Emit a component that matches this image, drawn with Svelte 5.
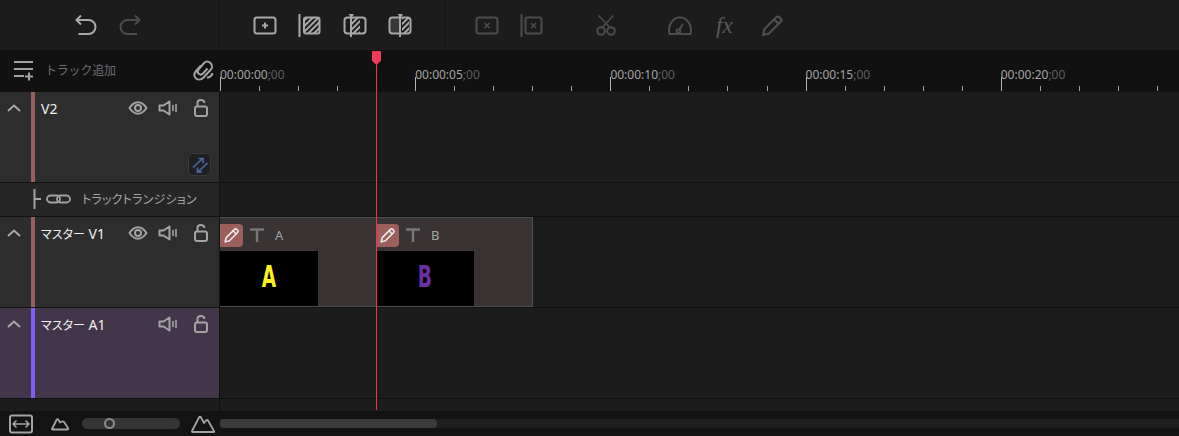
<script>
	const majors = ["00:00:00", "00:00:05", "00:00:10", "00:00:15", "00:00:20"];
	const clips = [
		{ name: "A", color: "#fff21f" },
		{ name: "B", color: "#6c2fa4" }
	];
</script>

{#snippet eye()}
	<svg class="ic" width="20" height="16" viewBox="0 0 20 16">
		<path d="M1.500 8C4 4.200 6.800 2.300 10 2.300S16 4.200 18.500 8C16 11.800 13.200 13.700 10 13.700S4 11.800 1.500 8Z" />
		<circle cx="10" cy="8" r="3" />
	</svg>
{/snippet}

{#snippet speaker()}
	<svg class="ic" width="20" height="16" viewBox="0 0 20 16">
		<path d="M1.500 5.500H5.500L11.500 1.500V14.500L5.500 10.500H1.500Z" stroke-linejoin="round" />
		<path d="M15 5V11M18 4V12" stroke-width="1.600" />
	</svg>
{/snippet}

{#snippet lock()}
	<svg class="ic" width="16" height="20" viewBox="0 0 16 20">
		<rect x="2" y="8.500" width="12" height="9.500" rx="2" />
		<path d="M4.500 8V4.800C4.500 1.200 11 1.200 11.500 4.800" />
	</svg>
{/snippet}

{#snippet chevron()}
	<svg class="chev" width="14" height="8" viewBox="0 0 14 8"><path d="M1 7L7 1.500L13 7" /></svg>
{/snippet}

{#snippet pencil(size)}
	<svg width={size} height={size} viewBox="0 0 20 20" class="pen">
		<path d="M2.500 17.500L3.800 12.500L13.500 2.800C14.300 2 15.400 2 16.200 2.800L17.200 3.800C18 4.600 18 5.700 17.200 6.500L7.500 16.200Z" stroke-linejoin="round" />
		<path d="M11.800 4.500L15.500 8.200" />
	</svg>
{/snippet}

<svg class="defs" width="0" height="0">
	<defs>
		<pattern id="hatch" patternUnits="userSpaceOnUse" width="4" height="4" patternTransform="rotate(45)">
			<rect width="2" height="4" fill="#a8a8a8" />
		</pattern>
	</defs>
</svg>

<div class="app">
	<div class="toolbar">
		<div class="group first">
			<svg class="tool on" width="24" height="24" viewBox="0 0 24 24">
				<path d="M2.500 6H14.500A7 7 0 0 1 14.500 20H4.500" />
				<path d="M7 1.500L2.500 6L7 10.500" />
			</svg>
			<svg class="tool off" width="24" height="24" viewBox="0 0 24 24">
				<path d="M21.500 6H9.500A7 7 0 0 0 9.500 20H19" />
				<path d="M17 1.500L21.500 6L17 10.500" />
			</svg>
		</div>
		<div class="group second">
			<svg class="tool on" width="24" height="24" viewBox="0 0 24 24">
				<rect x="1.500" y="3.500" width="21" height="16" rx="2.500" />
				<path d="M12 8.500V14.500M9 11.500H15" />
			</svg>
			<svg class="tool on" width="24" height="24" viewBox="0 0 24 24">
				<path d="M1.500 0V23" />
				<rect x="6" y="3.500" width="15.500" height="16" rx="2" fill="url(#hatch)" />
			</svg>
			<svg class="tool on" width="24" height="24" viewBox="0 0 24 24">
				<rect x="1.500" y="3.500" width="21" height="16" rx="3" />
				<rect x="9" y="4" width="8" height="15" fill="url(#hatch)" stroke="none" />
				<path d="M8 0V23" />
				<path d="M5.500 0H10.500V1.500L8 3Z" stroke="none" class="solid" />
			</svg>
			<svg class="tool on" width="24" height="24" viewBox="0 0 24 24">
				<rect x="2.500" y="4" width="9" height="15" fill="#383838" stroke="none" />
				<rect x="1.500" y="3.500" width="21" height="16" rx="3" />
				<rect x="14" y="4" width="7" height="15" fill="url(#hatch)" stroke="none" />
				<path d="M12 0V23" />
				<path d="M9.500 0H14.500V1.500L12 3Z" stroke="none" class="solid" />
			</svg>
		</div>
		<div class="group third">
			<svg class="tool off" width="24" height="24" viewBox="0 0 24 24">
				<rect x="1.500" y="3.500" width="21" height="16" rx="2.500" />
				<path d="M9.500 9L14.500 14M14.500 9L9.500 14" stroke-width="1.600" />
			</svg>
			<svg class="tool off gap-a" width="24" height="24" viewBox="0 0 24 24">
				<path d="M1.500 0V23" />
				<rect x="5.500" y="3.500" width="16" height="16" rx="2" />
				<path d="M11 9L16 14M16 9L11 14" stroke-width="1.600" />
			</svg>
			<svg class="tool off gap-b" width="24" height="24" viewBox="0 0 24 24">
				<path d="M4.500 1.500L15.500 13M19.500 1.500L8.500 13" stroke-width="1.600" />
				<circle cx="7" cy="17" r="3.800" />
				<circle cx="17" cy="17" r="3.800" />
			</svg>
			<svg class="tool off gap-b" width="24" height="24" viewBox="0 0 24 24">
				<path d="M1.500 20C-.5 11 5 3.500 12 3.500S24.500 11 22.500 20Z" stroke-linejoin="round" />
				<circle cx="10.500" cy="17" r="1.800" />
				<path d="M11.500 15.500L15 10" />
			</svg>
			<span class="fx">fx</span>
			<div class="pen-tool">{@render pencil(24)}</div>
		</div>
	</div>

	<div class="ruler-row">
		<div class="ruler-head">
			<svg class="ic add" width="20" height="20" viewBox="0 0 20 20">
				<path d="M0 2H19M0 9H19M0 16H10M11 16.500H19M15 12.500V20.500" />
			</svg>
			<span class="add-label">トラック追加</span>
			<svg class="ic clip-ic" width="22" height="22" viewBox="0 0 22 22">
				<path d="M9 6.500L4 12C1.500 15 2 18 4 19.500S9 21 11 19L18.500 11C20.500 9 20.500 6 18.500 4S14 2 12 4L6.500 10.500C5.500 12 5.500 14 7 15S10 15.500 11 14.500L15.500 9.500" />
				<path d="M15 18.500C17 19 20 17 20.500 14" />
			</svg>
		</div>
		<div class="ruler">
			{#each majors as label}
				<div class="seg">
					<div class="time">{label}<span class="frames">;00</span></div>
					<div class="ticks">
						<i class="major"></i><i></i><i></i><i></i><i></i>
					</div>
				</div>
			{/each}
		</div>
	</div>

	<div class="row video">
		<div class="head">
			<div class="fold">{@render chevron()}</div>
			<div class="accent"></div>
			<div class="info">
				<div class="line">
					<span class="name">V2</span>
					<span class="ctl first-ctl">{@render eye()}</span>
					<span class="ctl">{@render speaker()}</span>
					<span class="ctl lock">{@render lock()}</span>
				</div>
				<div class="swap">
					<svg width="18" height="18" viewBox="0 0 18 18">
						<path d="M2 11.500L11.500 2.500M7.500 2.500H12V7M16.500 7L7 16M11 16H6.500V11.500" />
					</svg>
				</div>
			</div>
		</div>
		<div class="lane"></div>
	</div>

	<div class="row trans">
		<div class="head">
			<svg class="ic branch" width="8" height="22" viewBox="0 0 8 22"><path d="M1.500 1V21M1.500 11H8" stroke-width="2" /></svg>
			<svg class="ic link" width="25" height="12" viewBox="0 0 25 12">
				<rect x="1" y="2.500" width="13" height="7" rx="3.500" stroke-width="1.800" />
				<rect x="11" y="2.500" width="13" height="7" rx="3.500" stroke-width="1.800" />
			</svg>
			<span class="trans-label">トラックトランジション</span>
		</div>
		<div class="lane"></div>
	</div>

	<div class="row video">
		<div class="head">
			<div class="fold">{@render chevron()}</div>
			<div class="accent"></div>
			<div class="info">
				<div class="line">
					<span class="name"><span class="kana">マスター</span> V1</span>
					<span class="ctl first-ctl">{@render eye()}</span>
					<span class="ctl">{@render speaker()}</span>
					<span class="ctl lock">{@render lock()}</span>
				</div>
			</div>
		</div>
		<div class="lane clips">
			{#each clips as clip}
				<div class="clip">
					<div class="clip-top">
						<span class="edit">{@render pencil(17)}</span>
						<svg class="t" width="16" height="16" viewBox="0 0 16 16"><path d="M1 2.500H15M8 2.500V15" /></svg>
						<span class="clip-name">{clip.name}</span>
					</div>
					<div class="thumb"><span style="color: {clip.color}">{clip.name}</span></div>
				</div>
			{/each}
		</div>
	</div>

	<div class="row audio">
		<div class="head">
			<div class="fold">{@render chevron()}</div>
			<div class="accent"></div>
			<div class="info">
				<div class="line">
					<span class="name"><span class="kana">マスター</span> A1</span>
					<span class="ctl">{@render speaker()}</span>
					<span class="ctl lock">{@render lock()}</span>
				</div>
			</div>
		</div>
		<div class="lane"></div>
	</div>

	<div class="row spare">
		<div class="head"></div>
		<div class="lane"></div>
	</div>

	<div class="bottom">
		<svg class="ic fit" width="24" height="20" viewBox="0 0 24 20">
			<rect x="1" y="1.500" width="22" height="17" rx="2" />
			<path d="M4 10H20M7.500 6.500L4 10L7.500 13.500M16.500 6.500L20 10L16.500 13.500" stroke-width="1.500" />
		</svg>
		<svg class="ic small-m" width="18" height="14" viewBox="0 0 18 14">
			<path d="M1 12L5.500 3C6 2 7 2 7.500 3L9 5.500L11 4.500C12 4 12.500 4.500 13 5L17 11C17.500 12 17 12.500 16 12.500H2C1 12.500 .8 12.500 1 12Z" stroke-width="1.800" stroke-linejoin="round" />
		</svg>
		<div class="slider"><span class="knob"></span></div>
		<svg class="ic big-m" width="24" height="18" viewBox="0 0 24 18">
			<path d="M1 16L8 2.500C8.500 1.500 9.500 1.500 10 2.500L13 8L15 5.500C15.500 5 16.500 5 17 5.500L23 16C23.500 16.800 23 17 22.500 17H2C1 17 .7 16.800 1 16Z" stroke-width="1.800" stroke-linejoin="round" />
		</svg>
		<div class="scroll"><div class="thumb-bar"></div></div>
	</div>

	<div class="playhead"></div>
</div>

<style>
	:global(body) {
		margin: 0;
		background: #1c1c1c;
		overflow: hidden;
	}
	.defs {
		position: absolute;
	}
	.app {
		position: relative;
		width: 1179px;
		height: 436px;
		display: flex;
		flex-direction: column;
		overflow: hidden;
		font-family: "Noto Sans", "Noto Sans CJK JP", sans-serif;
		background: #1c1c1c;
		color: #ddd;
	}
	svg {
		display: block;
		flex: none;
		overflow: visible;
	}
	.toolbar {
		height: 50px;
		display: flex;
		background: #1c1c1c;
	}
	.group {
		display: flex;
		align-items: center;
		height: 50px;
		padding-top: 1px;
		box-sizing: border-box;
		border-right: 1px solid #121212;
	}
	.group.first {
		width: 220px;
		padding-left: 74px;
		gap: 20px;
		box-sizing: border-box;
	}
	.group.second {
		width: 225px;
		padding-left: 33px;
		gap: 21px;
		box-sizing: border-box;
	}
	.group.third {
		flex: 1;
		padding-left: 30px;
		border-right: 0;
	}
	.tool {
		fill: none;
		stroke-width: 2;
	}
	.tool.on {
		stroke: #a8a8a8;
	}
	.tool.off {
		stroke: #4c4c4c;
	}
	.solid {
		fill: #a8a8a8;
	}
	.gap-a {
		margin-left: 21px;
	}
	.gap-b {
		margin-left: 50px;
	}
	.fx {
		margin-left: 24px;
		width: 20px;
		font-family: "Liberation Serif", serif;
		font-style: italic;
		font-size: 23px;
		line-height: 24px;
		color: #5a5a5a;
	}
	.pen-tool {
		margin-left: 24px;
		color: #4f4f4f;
	}
	.pen {
		fill: none;
		stroke: currentColor;
		stroke-width: 1.800;
	}

	.ruler-row {
		height: 42px;
		display: flex;
		background: #111;
	}
	.ruler-head {
		width: 219px;
		flex: none;
		position: relative;
		display: flex;
		align-items: center;
		padding: 0 0 2px 14px;
		box-sizing: border-box;
	}
	.ic {
		fill: none;
		stroke: #a3a3a3;
		stroke-width: 2;
	}
	.add {
		margin-right: 11px;
	}
	.add-label {
		font-size: 12px;
		letter-spacing: -.2px;
		color: #6e6e74;
	}
	.clip-ic {
		margin-left: auto;
		margin-right: 5px;
	}
	.ruler {
		flex: 1;
		display: flex;
		padding-left: 1px;
	}
	.seg {
		flex: none;
		width: 195.200px;
		display: flex;
		flex-direction: column;
		justify-content: flex-end;
		height: 41px;
	}
	.time {
		font-size: 12px;
		line-height: 16px;
		color: #a4a4a4;
		margin-bottom: -6px;
		white-space: nowrap;
	}
	.frames {
		color: #5e5e5e;
	}
	.ticks {
		display: flex;
		align-items: flex-end;
		height: 14px;
	}
	.ticks i {
		display: block;
		width: 39.040px;
		height: 5px;
		box-sizing: border-box;
		border-left: 1px solid #a0a0a0;
	}
	.ticks i.major {
		height: 14px;
		border-left-color: #b4b4b4;
	}

	.row {
		display: flex;
		flex: none;
		box-sizing: border-box;
		border-bottom: 1px solid #111;
	}
	.video {
		height: 91px;
	}
	.trans {
		height: 34px;
	}
	.audio {
		height: 91px;
	}
	.spare {
		height: 12px;
		border-bottom: 0;
	}
	.head {
		width: 220px;
		flex: none;
		display: flex;
		box-sizing: border-box;
		border-right: 1px solid #111;
		background: #2d2d2d;
	}
	.audio .head {
		background: #43364a;
	}
	.trans .head {
		background: #262626;
		align-items: center;
		padding: 0 0 2px 33px;
	}
	.spare .head {
		background: #1c1c1c;
	}
	.lane {
		flex: 1;
		background: #1c1c1c;
	}
	.fold {
		width: 31px;
		flex: none;
		padding: 12px 0 0 7px;
		box-sizing: border-box;
	}
	.chev {
		fill: none;
		stroke: #a8a8a8;
		stroke-width: 2;
	}
	.accent {
		width: 4px;
		flex: none;
		background: #99605e;
	}
	.audio .accent {
		background: #7e5ef8;
	}
	.info {
		flex: 1;
		padding: 5px 8px 0 6px;
		display: flex;
		flex-direction: column;
	}
	.line {
		display: flex;
		align-items: center;
		height: 22px;
	}
	.name {
		font-size: 14px;
		color: #f0f0f0;
		white-space: nowrap;
		margin-right: auto;
	}
	.kana {
		font-size: 12px;
		font-feature-settings: "palt";
	}
	.ctl {
		margin-left: 10px;
		display: block;
	}
	.ctl.first-ctl {
		margin-right: 0;
	}
	.ctl.lock {
		margin-left: 15px;
		margin-right: 2px;
	}
	.swap {
		align-self: flex-end;
		margin-top: 34px;
		width: 23px;
		height: 23px;
		background: #1f2024;
		border: 1px solid #3a3a3a;
		border-radius: 5px;
		box-sizing: border-box;
		display: flex;
		align-items: center;
		justify-content: center;
	}
	.swap svg {
		fill: none;
		stroke: #4e67a8;
		stroke-width: 1.600;
	}
	.branch {
		margin-right: 5px;
	}
	.link {
		margin-right: 11px;
		stroke: #a3a3a3;
	}
	.trans-label {
		font-size: 12px;
		letter-spacing: .2px;
		color: #a6a6a6;
		font-feature-settings: "palt";
		white-space: nowrap;
	}
	.clips {
		display: flex;
	}
	.clip {
		width: 156px;
		flex: none;
		height: 90px;
		box-sizing: border-box;
		background: #393333;
		border-top: 1px solid #505050;
		border-bottom: 1px solid #505050;
		display: flex;
		flex-direction: column;
	}
	.clip:last-child {
		width: 157px;
		border-right: 1px solid #505050;
	}
	.clip-top {
		height: 33px;
		display: flex;
		align-items: center;
		flex: none;
	}
	.edit {
		width: 23px;
		height: 23px;
		background: #9c5f5c;
		border-radius: 0 4px 4px 0;
		display: flex;
		align-items: center;
		justify-content: center;
		color: #eee;
		margin-top: 1px;
	}
	.t {
		margin-left: 6px;
		fill: none;
		stroke: #777;
		stroke-width: 2.400;
	}
	.clip-name {
		margin-left: 10px;
		font-size: 13px;
		color: #a5a5a5;
	}
	.thumb {
		width: 98px;
		height: 55px;
		background: #000;
		display: flex;
		align-items: center;
		justify-content: center;
	}
	.thumb span {
		font-family: "DejaVu Sans", sans-serif;
		font-weight: 700;
		font-size: 31px;
		line-height: 36px;
		margin-bottom: 5px;
		transform: scaleX(0.6);
	}

	.bottom {
		flex: 1;
		display: flex;
		align-items: center;
		background: #131313;
		padding-left: 9px;
	}
	.fit {
		margin-right: 18px;
	}
	.small-m {
		margin-right: 13px;
		stroke: #a3a3a3;
	}
	.slider {
		width: 98px;
		height: 11px;
		background: #353535;
		border-radius: 6px;
		display: flex;
		align-items: center;
		padding-left: 22px;
		box-sizing: border-box;
		margin-right: 11px;
	}
	.knob {
		width: 11px;
		height: 11px;
		box-sizing: border-box;
		border: 2px solid #8c8c8c;
		border-radius: 50%;
		background: #353535;
	}
	.big-m {
		margin-right: 5px;
	}
	.scroll {
		flex: 1;
		height: 9px;
		background: #1f1f1f;
		display: flex;
	}
	.thumb-bar {
		width: 217px;
		background: #3b3b3b;
		border-radius: 4px;
	}
	.playhead {
		position: absolute;
		left: 376px;
		top: 58px;
		width: 1px;
		height: 352px;
		background: #f0304f;
	}
	.playhead::before {
		content: "";
		position: absolute;
		left: -4px;
		top: -7px;
		width: 9px;
		height: 14px;
		background: #f43a5b;
		border-radius: 1px 1px 0 0;
		clip-path: polygon(0 0, 100% 0, 100% 70%, 50% 100%, 0 70%);
	}
</style>
